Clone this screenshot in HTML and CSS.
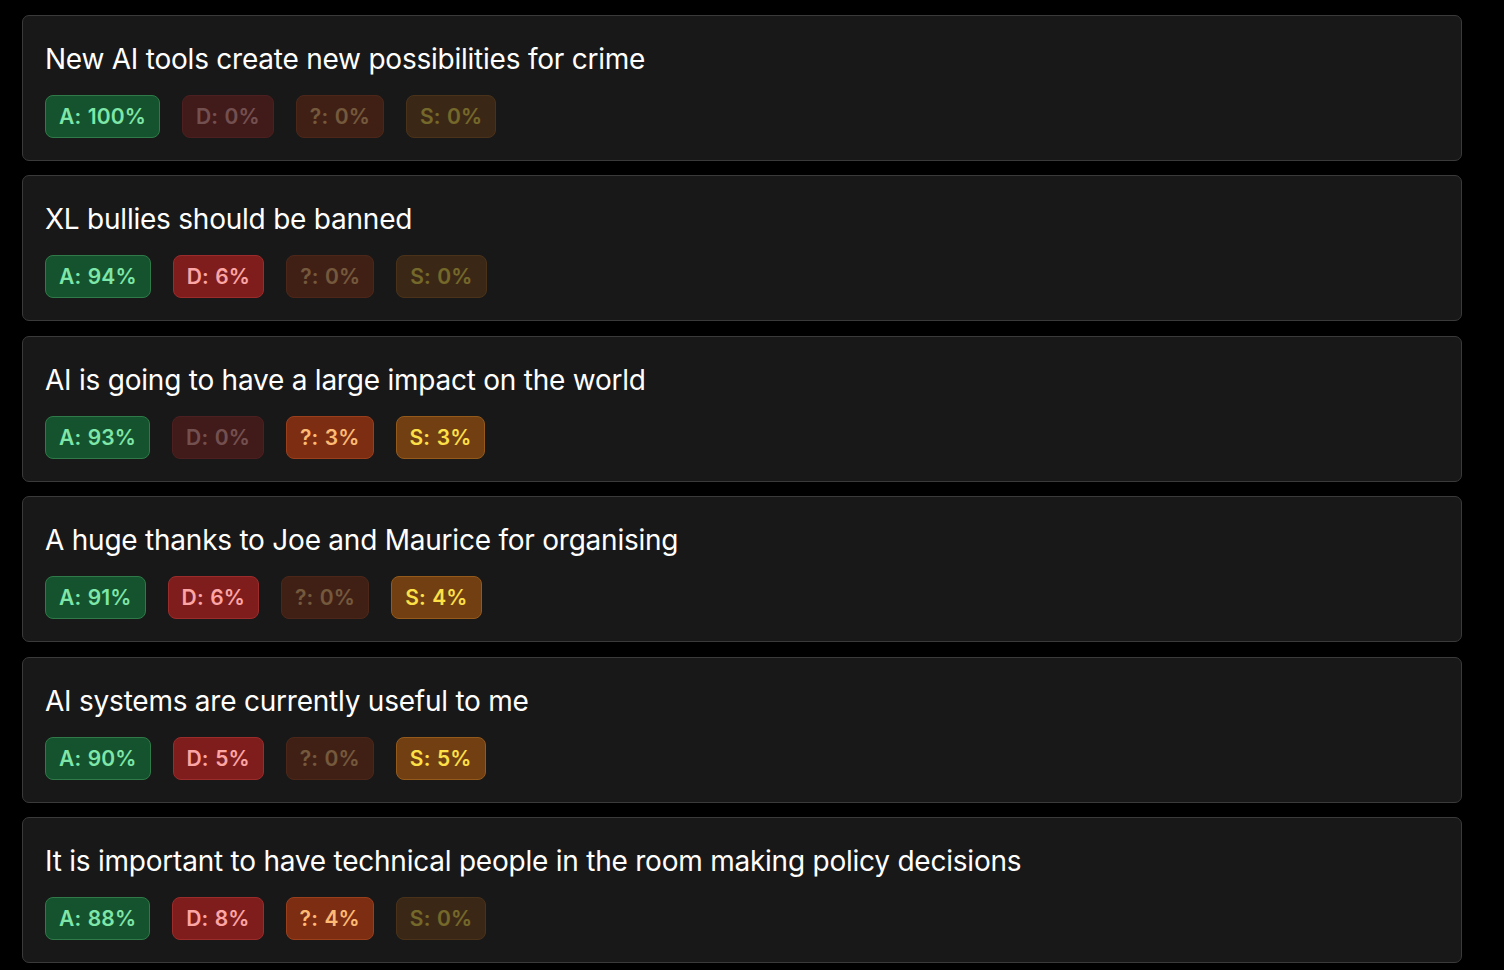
FILE: index.html
```html
<!DOCTYPE html>
<html lang="en">
<head>
<meta charset="utf-8">
<title>Statements</title>
<link rel="stylesheet" href="styles.css">
</head>
<body>
<main class="list">
  <section class="card">
    <h2 class="title">New AI tools create new possibilities for crime</h2>
    <div class="badges">
      <span class="badge agree">A: 100%</span>
      <span class="badge disagree off">D: 0%</span>
      <span class="badge unsure off">?: 0%</span>
      <span class="badge skip off">S: 0%</span>
    </div>
  </section>
  <section class="card">
    <h2 class="title">XL bullies should be banned</h2>
    <div class="badges">
      <span class="badge agree">A: 94%</span>
      <span class="badge disagree">D: 6%</span>
      <span class="badge unsure off">?: 0%</span>
      <span class="badge skip off">S: 0%</span>
    </div>
  </section>
  <section class="card">
    <h2 class="title">AI is going to have a large impact on the world</h2>
    <div class="badges">
      <span class="badge agree">A: 93%</span>
      <span class="badge disagree off">D: 0%</span>
      <span class="badge unsure">?: 3%</span>
      <span class="badge skip">S: 3%</span>
    </div>
  </section>
  <section class="card">
    <h2 class="title">A huge thanks to Joe and Maurice for organising</h2>
    <div class="badges">
      <span class="badge agree">A: 91%</span>
      <span class="badge disagree">D: 6%</span>
      <span class="badge unsure off">?: 0%</span>
      <span class="badge skip">S: 4%</span>
    </div>
  </section>
  <section class="card">
    <h2 class="title">AI systems are currently useful to me</h2>
    <div class="badges">
      <span class="badge agree">A: 90%</span>
      <span class="badge disagree">D: 5%</span>
      <span class="badge unsure off">?: 0%</span>
      <span class="badge skip">S: 5%</span>
    </div>
  </section>
  <section class="card">
    <h2 class="title">It is important to have technical people in the room making policy decisions</h2>
    <div class="badges">
      <span class="badge agree">A: 88%</span>
      <span class="badge disagree">D: 8%</span>
      <span class="badge unsure">?: 4%</span>
      <span class="badge skip off">S: 0%</span>
    </div>
  </section>
</main>
</body>
</html>
```
FILE: styles.css
```css
html, body {
  margin: 0;
  padding: 0;
  background: #000;
}
body {
  font-family: Inter, "Noto Sans", "Liberation Sans", sans-serif;
  color: #fff;
}
.list {
  display: flex;
  flex-direction: column;
  gap: 14.4px;
  width: 1440px;
  padding: 15px 0 0 22px;
}
.card {
  background: #181818;
  border: 1px solid #3a3a3a;
  border-radius: 7px;
  padding: 22px 22px 22px;
  display: flex;
  flex-direction: column;
  gap: 15px;
}
.title {
  margin: 0;
  font-size: 28px;
  line-height: 42px;
  font-weight: 400;
  letter-spacing: -0.23px;
  color: #fff;
}
.badges {
  display: flex;
  gap: 22px;
}
.badge {
  box-sizing: border-box;
  height: 43px;
  display: inline-flex;
  align-items: center;
  padding: 0 13px;
  border: 1.5px solid;
  border-radius: 8px;
  font-size: 21px;
  font-weight: 600;
  letter-spacing: 0.15px;
  word-spacing: 1px;
}
.agree {
  background: #14532d;
  border-color: #2f7a48;
  color: #7ee6a8;
}
.disagree {
  background: #7f1d1d;
  border-color: #9b2c2c;
  color: #fca5a5;
}
.unsure {
  background: #7c2d12;
  border-color: #9a3f1c;
  color: #fdba74;
}
.skip {
  background: #713f12;
  border-color: #935a1c;
  color: #fde047;
}
.off {
  opacity: 0.4;
}
```
